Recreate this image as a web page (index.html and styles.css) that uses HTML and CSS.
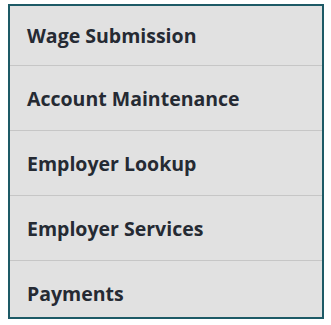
FILE: index.html
```html
<!DOCTYPE html>
<html lang="en">
<head>
    <meta charset="UTF-8">
    <meta name="viewport" content="width=device-width, initial-scale=1.0">
    <title>Employer Menu</title>
    <link rel="stylesheet" href="styles.css">
</head>
<body>

<nav class="side-menu">
    <a class="side-menu-item" href="#">Wage Submission</a>
    <a class="side-menu-item" href="#">Account Maintenance</a>
    <a class="side-menu-item" href="#">Employer Lookup</a>
    <a class="side-menu-item" href="#">Employer Services</a>
    <a class="side-menu-item" href="#">Payments</a>
</nav>

</body>
</html>
```

FILE: styles.css
```css
body {
    margin: 0;
    background-color: #fff;
    font-family: "Open Sans", "Noto Sans", Arial, sans-serif;
}

.side-menu {
    display: flex;
    flex-direction: column;
    width: 312px;
    height: 311px;
    margin: 4px 0 0 8px;
    border: 2px solid #1d5a66;
    background-color: #e1e1e1;
    overflow: hidden;
}

.side-menu-item {
    display: flex;
    align-items: center;
    flex-shrink: 0;
    height: 64px;
    padding: 0 0 0 17px;
    border-bottom: 1px solid #c6c6c6;
    color: #252a33;
    font-size: 19.5px;
    font-weight: 700;
    text-decoration: none;
}

.side-menu-item:first-child {
    height: 59px;
}

.side-menu-item:last-child {
    border-bottom: none;
}
```
